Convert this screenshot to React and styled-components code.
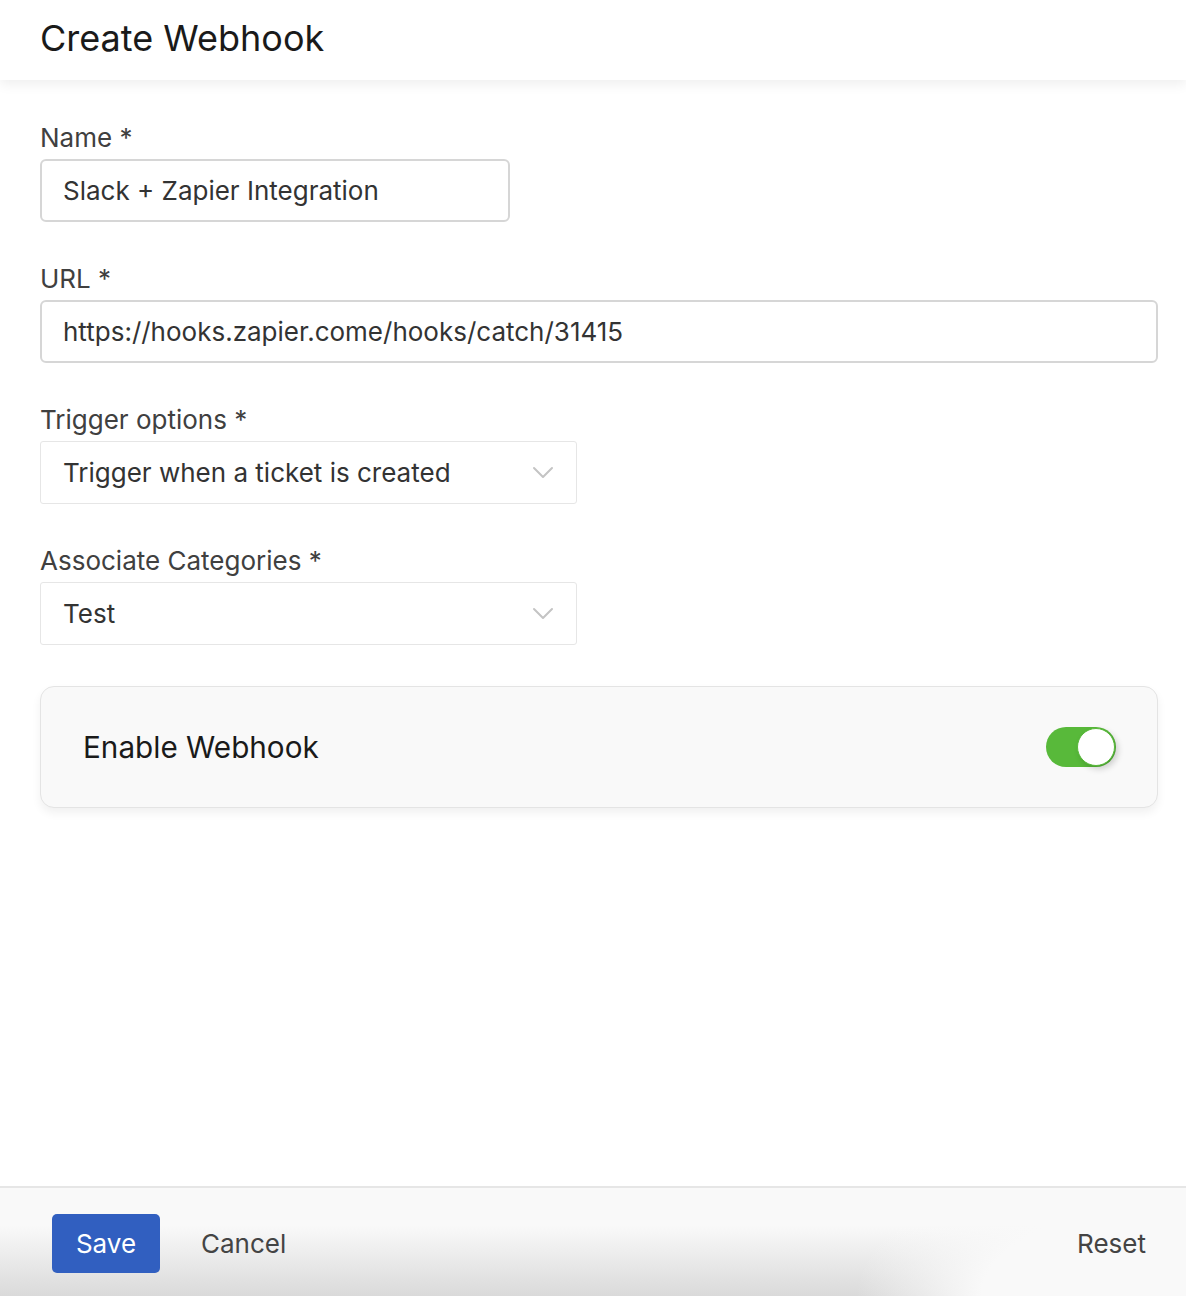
import React, { useState } from "react";
import styled, { createGlobalStyle } from "styled-components";

const GlobalStyle = createGlobalStyle`
  * { box-sizing: border-box; }
  body {
    margin: 0;
    font-family: Inter, "Noto Sans", "Liberation Sans", sans-serif;
    background: #fff;
  }
`;

// small chevron used by the select boxes
const Chevron = () => (
  <svg width="22" height="14" viewBox="0 0 22 14" fill="none">
    <path d="M2 2l9 9 9-9" stroke="#c4c4c4" strokeWidth="2" strokeLinecap="round" strokeLinejoin="round" />
  </svg>
);

const App = () => {
  const [enabled, setEnabled] = useState(true);

  return (
    <>
      <GlobalStyle />
      <Page>
        <Header>
          <Title>Create Webhook</Title>
        </Header>

        <Main>
          <Field>
            <Label>Name *</Label>
            <TextBox $width="470px">Slack + Zapier Integration</TextBox>
          </Field>

          <Field>
            <Label>URL *</Label>
            <TextBox>https://hooks.zapier.come/hooks/catch/31415</TextBox>
          </Field>

          <Field>
            <Label>Trigger options *</Label>
            <SelectBox>
              <span>Trigger when a ticket is created</span>
              <Chevron />
            </SelectBox>
          </Field>

          <Field>
            <Label>Associate Categories *</Label>
            <SelectBox>
              <span>Test</span>
              <Chevron />
            </SelectBox>
          </Field>

          <ToggleCard>
            <ToggleLabel>Enable Webhook</ToggleLabel>
            <Switch $on={enabled} onClick={() => setEnabled(!enabled)}>
              <Knob $on={enabled} />
            </Switch>
          </ToggleCard>
        </Main>

        <Footer>
          <SaveButton>Save</SaveButton>
          <TextButton>Cancel</TextButton>
          <Spacer />
          <TextButton>Reset</TextButton>
        </Footer>
      </Page>
    </>
  );
};

const Page = styled.div`
  min-height: 100vh;
  display: flex;
  flex-direction: column;
`;

const Header = styled.header`
  height: 80px;
  display: flex;
  align-items: center;
  padding: 0 40px;
  background: #fff;
  box-shadow: 0 4px 12px rgba(0, 0, 0, 0.07);
  position: relative;
  z-index: 1;
`;

const Title = styled.h1`
  margin: 0;
  padding-bottom: 5px;
  font-size: 36px;
  font-weight: 400;
  color: #1a1a1a;
`;

const Main = styled.main`
  flex: 1;
  padding: 42px 28px 40px 40px;
  display: flex;
  flex-direction: column;
`;

const Field = styled.div`
  display: flex;
  flex-direction: column;
  margin-bottom: 41px;
`;

const Label = styled.label`
  font-size: 26px;
  line-height: 32px;
  color: #404040;
  margin-bottom: 5px;
`;

const TextBox = styled.div`
  width: ${(p) => p.$width || "100%"};
  height: 63px;
  display: flex;
  align-items: center;
  padding: 0 21px;
  border: 2px solid #d6d6d6;
  border-radius: 6px;
  font-size: 26px;
  color: #333;
`;

const SelectBox = styled.div`
  width: 537px;
  height: 63px;
  display: flex;
  align-items: center;
  justify-content: space-between;
  padding: 0 22px 0 22px;
  border: 1.5px solid #e6e6e6;
  border-radius: 3px;
  font-size: 26px;
  color: #333;
`;

const ToggleCard = styled.div`
  height: 122px;
  display: flex;
  align-items: center;
  justify-content: space-between;
  padding: 0 41px 0 42px;
  background: #f9f9f9;
  border: 1.5px solid #e4e4e4;
  border-radius: 14px;
  box-shadow: 0 5px 10px rgba(0, 0, 0, 0.06);
`;

const ToggleLabel = styled.span`
  font-size: 29.7px;
  color: #1a1a1a;
`;

const Switch = styled.button`
  width: 70px;
  height: 40px;
  border: none;
  border-radius: 20px;
  padding: 1px;
  background: ${(p) => (p.$on ? "#58b93a" : "#d0d0d0")};
  display: flex;
  justify-content: ${(p) => (p.$on ? "flex-end" : "flex-start")};
  align-items: center;
  cursor: pointer;
`;

const Knob = styled.span`
  width: 38px;
  height: 38px;
  border-radius: 50%;
  background: #fff;
  border: 1.5px solid ${(p) => (p.$on ? "#58b93a" : "#d0d0d0")};
  box-shadow: 3px 3px 6px rgba(0, 0, 0, 0.18);
`;

const Footer = styled.footer`
  height: 110px;
  display: flex;
  align-items: center;
  gap: 41px;
  padding: 2px 40px 0 52px;
  border-top: 2px solid #e6e6e6;
  background:
    radial-gradient(ellipse 330px 150px at 100% 100%, #f9f9f9 62%, rgba(249, 249, 249, 0) 100%),
    linear-gradient(to bottom, #f9f9f9 35%, #dadada 100%);
`;

const SaveButton = styled.button`
  width: 108px;
  height: 59px;
  border: none;
  border-radius: 5px;
  background: #315fc0;
  color: #fff;
  font-family: inherit;
  font-size: 26px;
  cursor: pointer;
`;

const TextButton = styled.button`
  border: none;
  background: none;
  padding: 0;
  font-family: inherit;
  font-size: 26px;
  color: #444;
  cursor: pointer;
`;

const Spacer = styled.div`
  flex: 1;
`;

export default App;
